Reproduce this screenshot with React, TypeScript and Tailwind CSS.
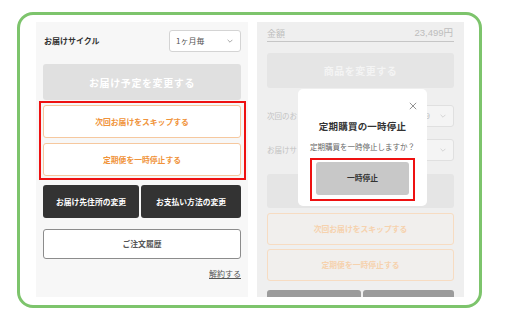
import React from 'react';

const jp = { fontFamily: '"Noto Sans CJK JP", "Noto Sans", sans-serif' };

const Chevron: React.FC<{ className?: string }> = ({ className }) => (
    <svg viewBox="0 0 10 6" className={className} fill="none" stroke="currentColor" strokeWidth="1.2">
        <path d="M1 1l4 4 4-4" />
    </svg>
);

const LeftPanel: React.FC = () => (
    <div className="w-[212px] h-[275px] shrink-0 overflow-hidden bg-[#f7f7f7] px-[7px] pt-[8px]">
        <div className="flex items-center justify-between h-[22px]">
            <span className="text-[8px] font-bold text-[#333] ml-px">お届けサイクル</span>
            <div className="w-[72px] h-[22px] bg-white border border-[#d4d4d4] rounded-[3px] flex items-center justify-between pl-[6px] pr-[7px]">
                <span className="text-[8px] text-[#555]">1ヶ月毎</span>
                <Chevron className="w-[6px] h-[4px] text-[#888]" />
            </div>
        </div>
        <div className="mt-[12px] h-[36px] rounded-[3px] bg-[#e0e0e0] flex items-center justify-center">
            <span className="text-[10px] tracking-[0.6px] text-white font-bold">お届け予定を変更する</span>
        </div>
        <div className="relative mt-[5px]">
            <div className="h-[33px] bg-white border border-[#f6c89e] rounded-[3px] flex items-center justify-center">
                <span className="text-[7.8px] font-bold text-[#f0933a]">次回お届けをスキップする</span>
            </div>
            <div className="mt-[5px] h-[33px] bg-white border border-[#f6c89e] rounded-[3px] flex items-center justify-center">
                <span className="text-[7.8px] font-bold text-[#f0933a]">定期便を一時停止する</span>
            </div>
            <span className="absolute -left-[4px] -right-[5px] -top-[4px] -bottom-[4px] border-2 border-[#ee1111]" />
        </div>
        <div className="mt-[9px] flex gap-[2px]">
            <div className="w-[96px] h-[33px] bg-[#333333] rounded-[3px] flex items-center justify-center">
                <span className="text-[7.8px] font-bold text-white">お届け先住所の変更</span>
            </div>
            <div className="flex-1 h-[33px] bg-[#333333] rounded-[3px] flex items-center justify-center">
                <span className="text-[7.8px] font-bold text-white">お支払い方法の変更</span>
            </div>
        </div>
        <div className="mt-[11px] h-[30px] bg-white border border-[#8c8c8c] rounded-[3px] flex items-center justify-center">
            <span className="text-[7.8px] font-bold text-[#555]">ご注文履歴</span>
        </div>
        <div className="mt-[9px] flex justify-end">
            <span className="text-[8px] text-[#555] underline">解約する</span>
        </div>
    </div>
);

const RightPanel: React.FC = () => (
    <div className="relative w-[207px] h-[275px] shrink-0 overflow-hidden bg-[#efefef]">
        <div className="px-[10px] pt-[5px]">
            <div className="flex items-end justify-between h-[15px] pb-[1px] border-b border-[#c6c6c6]">
                <span className="text-[9px] text-[#bdbdbd]">金額</span>
                <span className="text-[9.5px] text-[#bdbdbd] mr-[1px]" style={{ fontFamily: '"Liberation Sans", "Noto Sans CJK JP", sans-serif' }}>23,499円</span>
            </div>
            <div className="mt-[11px] h-[35px] rounded-[3px] bg-[#e5e5e5] flex items-center justify-center">
                <span className="text-[10px] tracking-[0.5px] text-[#f4f4f4] font-bold">商品を変更する</span>
            </div>
            <div className="mt-[17px] flex items-center justify-between h-[22px]">
                <span className="whitespace-nowrap text-[7.5px] text-[#c2c2c2]">次回のお</span>
                <div className="w-[72px] h-[22px] bg-[#f4f4f4] border border-[#e0e0e0] rounded-[3px] flex items-center justify-end gap-[10px] pr-[7px]">
                    <span className="text-[8px] text-[#c2c2c2]">2021/09/09</span>
                    <Chevron className="w-[6px] h-[4px] text-[#c8c8c8]" />
                </div>
            </div>
            <div className="mt-[12px] flex items-center justify-between h-[22px]">
                <span className="whitespace-nowrap text-[7.5px] text-[#c2c2c2]">お届けサ</span>
                <div className="w-[72px] h-[22px] bg-[#f4f4f4] border border-[#e0e0e0] rounded-[3px] flex items-center justify-end pl-[6px] pr-[7px]">
                    <Chevron className="w-[6px] h-[4px] text-[#c8c8c8]" />
                </div>
            </div>
            <div className="mt-[13px] h-[34px] rounded-[3px] bg-[#e5e5e5]" />
            <div className="mt-[5px] h-[32px] bg-[#f1efed] border border-[#f7dcc2] rounded-[3px] flex items-center justify-center">
                <span className="text-[7.8px] font-bold text-[#f6d2ae]">次回お届けをスキップする</span>
            </div>
            <div className="mt-[4px] h-[32px] bg-[#f1efed] border border-[#f7dcc2] rounded-[3px] flex items-center justify-center">
                <span className="text-[7.8px] font-bold text-[#f6d2ae]">定期便を一時停止する</span>
            </div>
            <div className="mt-[9px] flex gap-[2px]">
                <div className="w-[94px] h-[33px] bg-[#9b9b9b] rounded-[3px]" />
                <div className="flex-1 h-[33px] bg-[#9b9b9b] rounded-[3px]" />
            </div>
        </div>
        <div className="absolute left-[41px] top-[67px] w-[129px] h-[117px] bg-white rounded-[5px] flex flex-col items-center">
            <svg viewBox="0 0 10 10" className="absolute right-[10px] top-[13px] w-[8px] h-[8px] text-[#777]" fill="none" stroke="currentColor" strokeWidth="1">
                <path d="M1 1l8 8M9 1l-8 8" />
            </svg>
            <span className="mt-[30px] text-[9.5px] font-bold text-[#333] tracking-[0.2px]">定期購買の一時停止</span>
            <span className="mt-[8px] text-[7.5px] text-[#666]">定期購買を一時停止しますか？</span>
            <div className="relative mt-[9px]">
                <div className="w-[93px] h-[33px] rounded-[3px] bg-[#c8c8c8] flex items-center justify-center">
                    <span className="text-[7.8px] font-bold text-[#333]">一時停止</span>
                </div>
                <span className="absolute -left-[6px] -right-[6px] -top-[4px] -bottom-[6px] border-2 border-[#ee1111]" />
            </div>
        </div>
    </div>
);

const App: React.FC = () => {
    return (
        <div className="w-[509px] h-[334px] bg-white pl-[17px] pt-[12px]" style={jp}>
            <div className="w-[465px] h-[296px] border-[3px] border-[#7dc46c] rounded-[16px] pl-[16px] pt-[7px] flex gap-[9px]">
                <LeftPanel />
                <RightPanel />
            </div>
        </div>
    );
};

export default App;
